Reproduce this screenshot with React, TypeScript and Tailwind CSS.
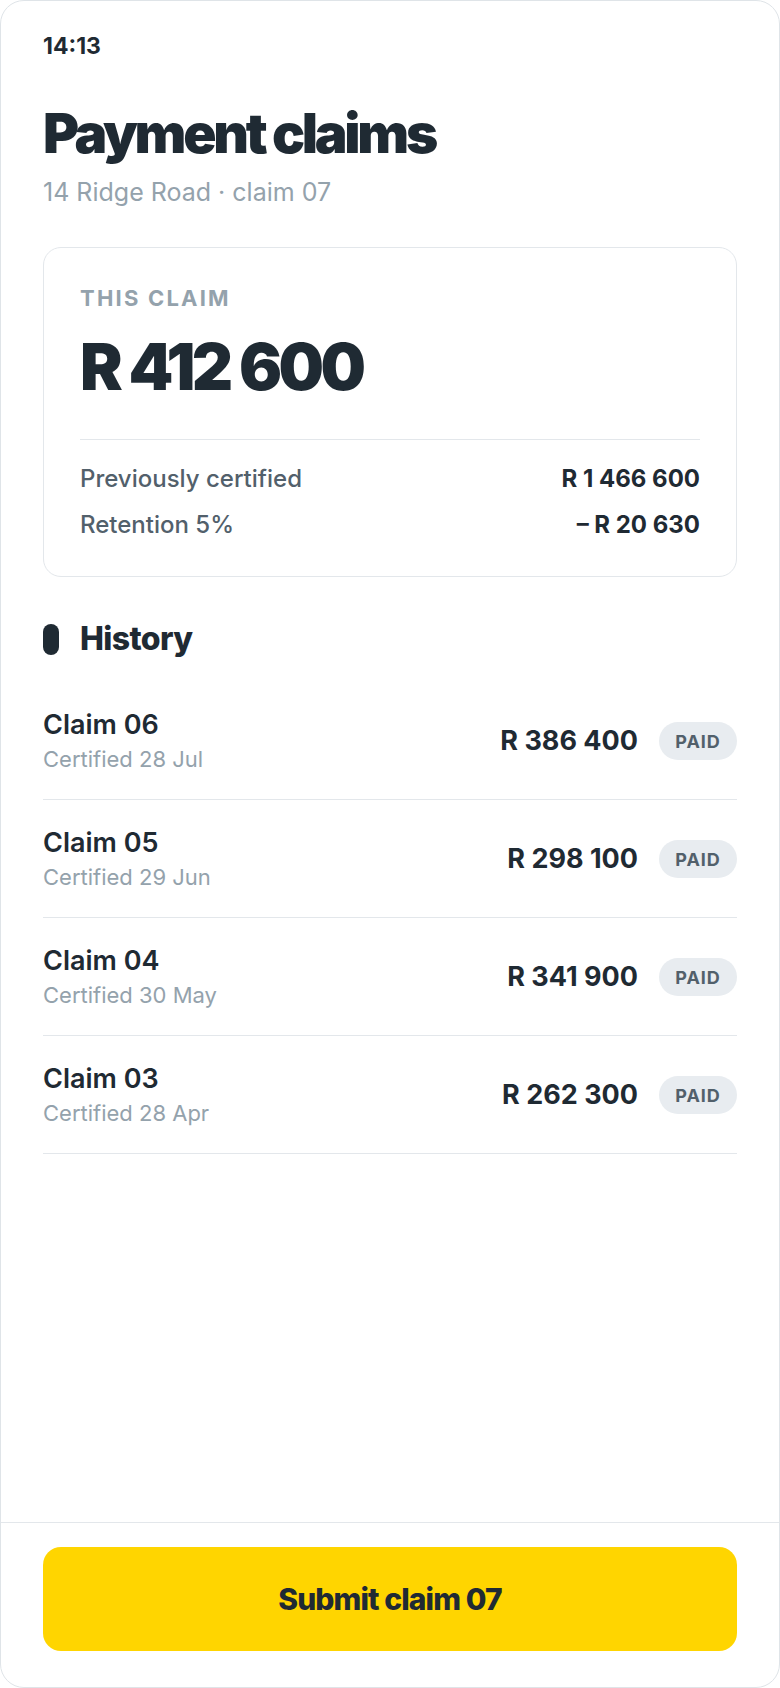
const history = [
  { name: "Claim 06", date: "Certified 28 Jul", amount: "R 386 400" },
  { name: "Claim 05", date: "Certified 29 Jun", amount: "R 298 100" },
  { name: "Claim 04", date: "Certified 30 May", amount: "R 341 900" },
  { name: "Claim 03", date: "Certified 28 Apr", amount: "R 262 300" },
];

export default function App() {
  return (
    <div className="min-h-screen bg-white font-['Inter','Liberation_Sans',sans-serif] text-[#1f2a33]">
      <div className="flex h-[1688px] flex-col overflow-hidden rounded-[24px] border border-[#dfe4e8] bg-white">
        <main className="flex-1 px-[42px] pt-8">
          <div className="text-[23px] font-bold leading-[26px]">14:13</div>

          <h1 className="mt-[47px] text-[55px] font-black leading-none tracking-[-0.06em]">Payment claims</h1>
          <p className="mt-4 text-[25px] leading-[30px] text-[#94a2ac]">14 Ridge Road · claim 07</p>

          {/* current claim */}
          <section className="mt-10 rounded-[18px] border border-[#e3e7eb] p-9">
            <div className="text-[22px] font-bold uppercase leading-[28px] tracking-[0.1em] text-[#94a2ac]">This claim</div>
            <div className="mt-[23px] text-[64px] font-black leading-none tracking-[-0.055em]">R 412 600</div>
            <div className="mt-10 border-t border-[#e3e7eb] pt-6">
              <div className="flex items-center justify-between text-[24px] leading-[30px]">
                <span className="font-medium text-[#52606b]">Previously certified</span>
                <span className="font-bold">R 1 466 600</span>
              </div>
              <div className="mt-4 flex items-center justify-between text-[24px] leading-[30px]">
                <span className="font-medium text-[#52606b]">Retention 5%</span>
                <span className="font-bold">– R 20 630</span>
              </div>
            </div>
          </section>

          {/* history */}
          <div className="mt-11 flex items-center gap-[21px]">
            <span className="h-[31px] w-4 rounded-full bg-[#1f2a33]" />
            <h2 className="text-[32px] font-extrabold leading-9 tracking-[-0.02em]">History</h2>
          </div>

          <ul className="mt-[25px]">
            {history.map((row) => (
              <li key={row.name} className="flex items-center justify-between border-b border-[#e3e7eb] pb-[26px] pt-[27px]">
                <div>
                  <div className="text-[27px] font-semibold leading-8">{row.name}</div>
                  <div className="mt-1 text-[22px] leading-7 text-[#94a2ac]">{row.date}</div>
                </div>
                <div className="flex items-center gap-[21px]">
                  <span className="text-[27px] font-bold">{row.amount}</span>
                  <span className="flex h-[38px] w-[78px] items-center justify-center rounded-full bg-[#e8ecf0] text-[18px] font-bold tracking-[0.05em] text-[#52606b]">
                    PAID
                  </span>
                </div>
              </li>
            ))}
          </ul>
        </main>

        <footer className="border-t border-[#e3e7eb] px-[42px] pb-9 pt-6">
          <button className="flex h-[104px] w-full items-center justify-center rounded-[18px] bg-[#ffd500] text-[30px] font-extrabold tracking-[-0.03em] text-[#1f2a33]">
            Submit claim 07
          </button>
        </footer>
      </div>
    </div>
  );
}
